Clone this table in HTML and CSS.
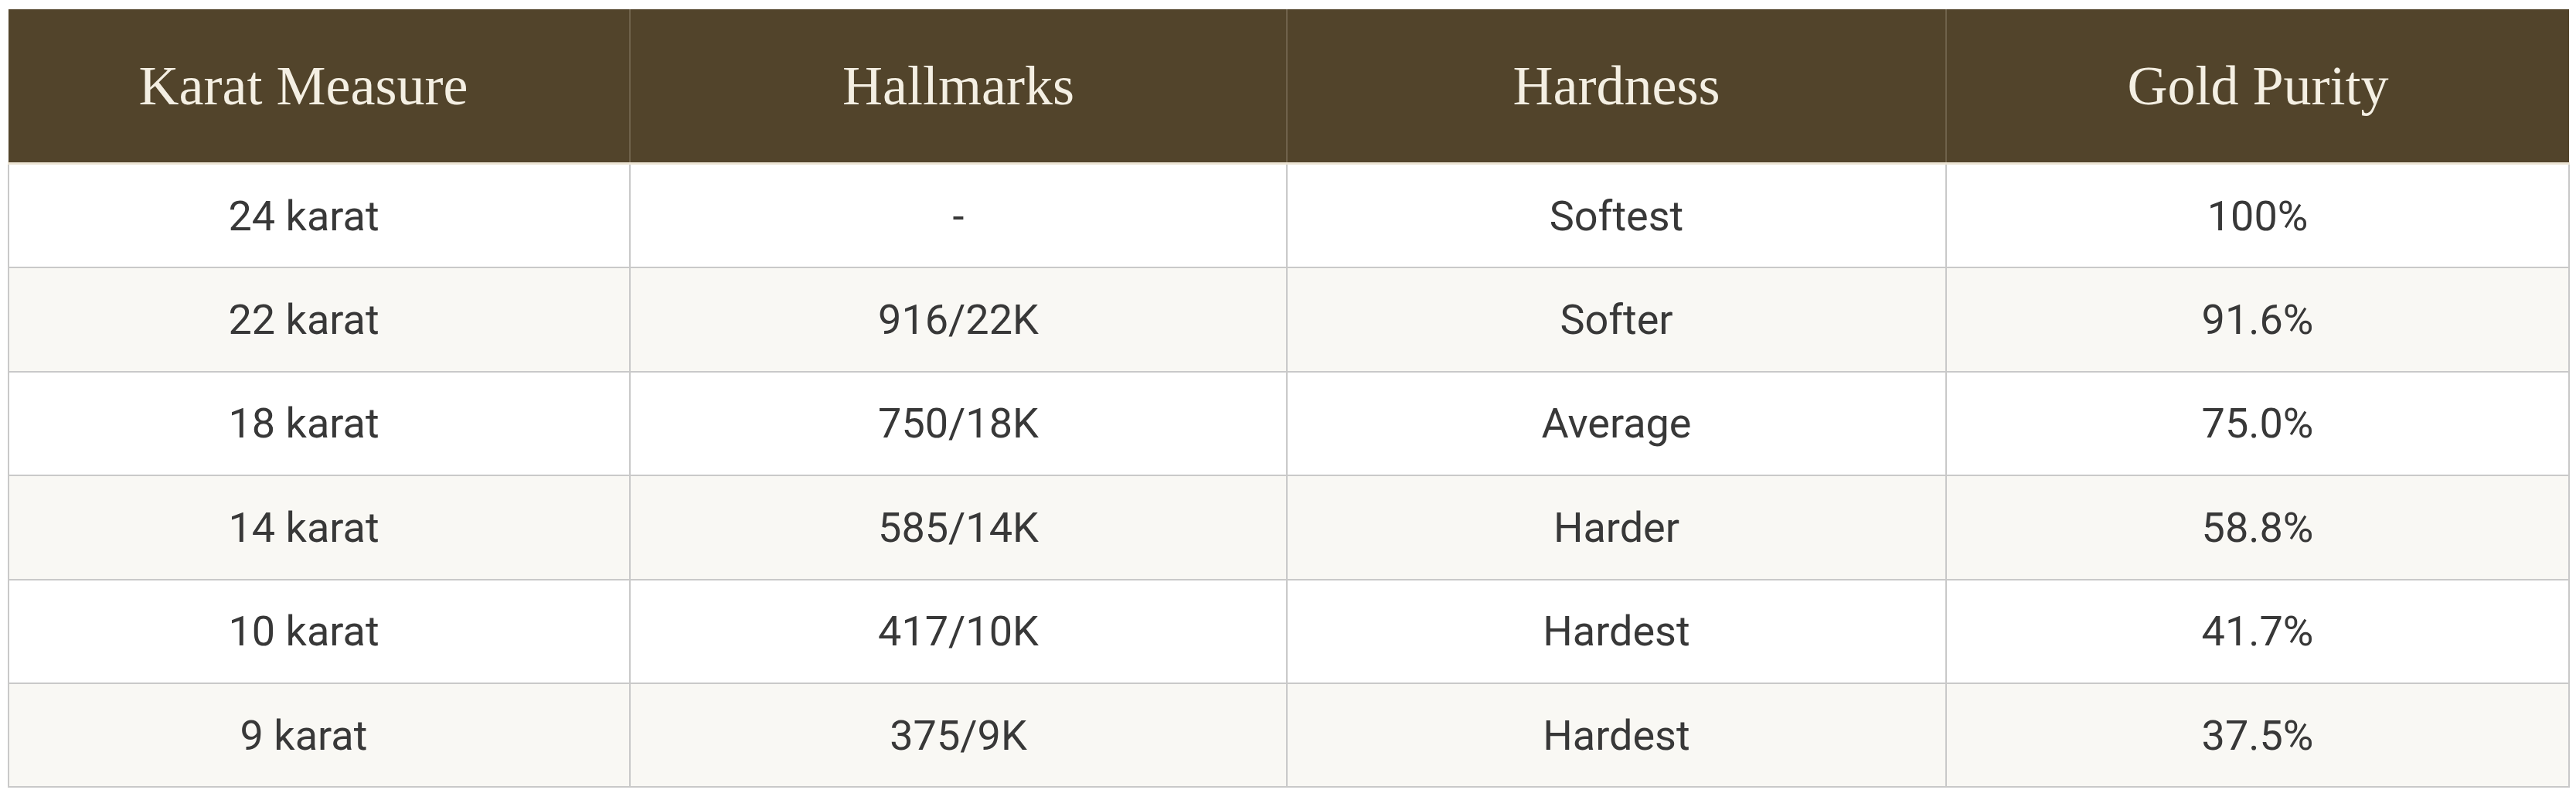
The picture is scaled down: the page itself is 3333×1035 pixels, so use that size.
FILE: index.html
```html
<!DOCTYPE html>
<html lang="en">
<head>
<meta charset="utf-8">
<title>Karat Measure</title>
<link rel="stylesheet" href="styles.css">
</head>
<body>
<div class="wrap">
<table class="karat">
  <colgroup>
    <col class="c1"><col class="c2"><col class="c3"><col class="c4">
  </colgroup>
  <thead>
    <tr><th>Karat Measure</th><th>Hallmarks</th><th>Hardness</th><th>Gold Purity</th></tr>
  </thead>
  <tbody>
    <tr><td>24 karat</td><td>-</td><td>Softest</td><td>100%</td></tr>
    <tr><td>22 karat</td><td>916/22K</td><td>Softer</td><td>91.6%</td></tr>
    <tr><td>18 karat</td><td>750/18K</td><td>Average</td><td>75.0%</td></tr>
    <tr><td>14 karat</td><td>585/14K</td><td>Harder</td><td>58.8%</td></tr>
    <tr><td>10 karat</td><td>417/10K</td><td>Hardest</td><td>41.7%</td></tr>
    <tr><td>9 karat</td><td>375/9K</td><td>Hardest</td><td>37.5%</td></tr>
  </tbody>
</table>
</div>
</body>
</html>
```

FILE: styles.css
```css
html, body {
  margin: 0;
  padding: 0;
  background: #ffffff;
}
.wrap {
  padding: 12px 10px 0 10px;
}
.karat {
  width: 3313px;
  border-collapse: collapse;
  table-layout: fixed;
  font-family: Roboto, "Liberation Sans", sans-serif;
}
.c1 { width: 804px; }
.c2 { width: 850px; }
.c3 { width: 853px; }
.c4 { width: 806px; }
.karat th {
  height: 198px;
  padding: 0;
  background: #52442b;
  color: #f4efe3;
  font-family: "Liberation Serif", "DejaVu Serif", serif;
  font-weight: normal;
  font-size: 72px;
  text-align: center;
  vertical-align: middle;
  border-left: 2px solid #6f624b;
  border-bottom: 3px solid #ece4d4;
}
.karat th:first-child { border-left: 0; }
.karat td {
  height: 132.4px;
  padding: 0;
  color: #383838;
  font-size: 54px;
  text-align: center;
  vertical-align: middle;
  border: 2px solid #c9c9c9;
}
.karat th:first-child,
.karat td:first-child {
  padding-right: 40px;
}
.karat tbody tr:nth-child(even) td {
  background: #f9f8f4;
}
```
